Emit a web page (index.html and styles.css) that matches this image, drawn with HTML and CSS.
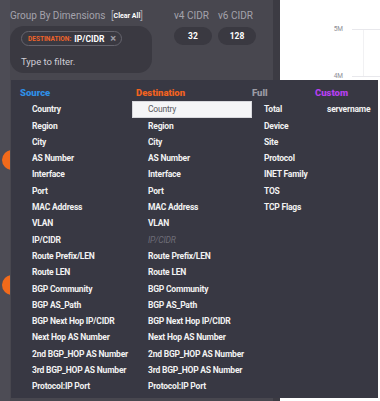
FILE: index.html
```html
<!DOCTYPE html>
<html lang="en">
<head>
  <meta charset="UTF-8" />
  <title>Group By Dimensions</title>
  <link rel="stylesheet" href="styles.css">
</head>
<body>
  <div class="app">
    <div class="panel">
      <div class="rail">
        <span class="dot"></span>
        <span class="dot dot-low"></span>
      </div>
      <div class="controls">
        <div class="group">
          <div class="group-label">Group By Dimensions <span class="clear">[<b>Clear All</b>]</span></div>
          <div class="filter">
            <div class="chip"><em>Destination:</em> IP/CIDR <i>&times;</i></div>
            <div class="hint">Type to filter.</div>
          </div>
        </div>
        <div class="cidr">
          <div class="cidr-label">v4 CIDR</div>
          <div class="pill">32</div>
        </div>
        <div class="cidr">
          <div class="cidr-label">v6 CIDR</div>
          <div class="pill">128</div>
        </div>
      </div>
    </div>

    <div class="chart">
      <div class="tick first"><span>5M</span><div class="line"></div></div>
      <div class="tick"><span>4M</span><div class="line"></div></div>
    </div>

    <div class="menu">
      <div class="col">
        <div class="head source">Source</div>
        <div class="item">Country</div>
        <div class="item">Region</div>
        <div class="item">City</div>
        <div class="item">AS Number</div>
        <div class="item">Interface</div>
        <div class="item">Port</div>
        <div class="item">MAC Address</div>
        <div class="item">VLAN</div>
        <div class="item">IP/CIDR</div>
        <div class="item">Route Prefix/LEN</div>
        <div class="item">Route LEN</div>
        <div class="item">BGP Community</div>
        <div class="item">BGP AS_Path</div>
        <div class="item">BGP Next Hop IP/CIDR</div>
        <div class="item">Next Hop AS Number</div>
        <div class="item">2nd BGP_HOP AS Number</div>
        <div class="item">3rd BGP_HOP AS Number</div>
        <div class="item">Protocol:IP Port</div>
      </div>
      <div class="col">
        <div class="head dest">Destination</div>
        <div class="item active">Country</div>
        <div class="item">Region</div>
        <div class="item">City</div>
        <div class="item">AS Number</div>
        <div class="item">Interface</div>
        <div class="item">Port</div>
        <div class="item">MAC Address</div>
        <div class="item">VLAN</div>
        <div class="item disabled">IP/CIDR</div>
        <div class="item">Route Prefix/LEN</div>
        <div class="item">Route LEN</div>
        <div class="item">BGP Community</div>
        <div class="item">BGP AS_Path</div>
        <div class="item">BGP Next Hop IP/CIDR</div>
        <div class="item">Next Hop AS Number</div>
        <div class="item">2nd BGP_HOP AS Number</div>
        <div class="item">3rd BGP_HOP AS Number</div>
        <div class="item">Protocol:IP Port</div>
      </div>
      <div class="col">
        <div class="head full">Full</div>
        <div class="item">Total</div>
        <div class="item">Device</div>
        <div class="item">Site</div>
        <div class="item">Protocol</div>
        <div class="item">INET Family</div>
        <div class="item">TOS</div>
        <div class="item">TCP Flags</div>
      </div>
      <div class="col">
        <div class="head custom">Custom</div>
        <div class="item">servername</div>
      </div>
    </div>
  </div>
</body>
</html>
```

FILE: styles.css
```css
body {
  margin: 0;
  font-family: 'Roboto', 'Liberation Sans', sans-serif;
  background: #48474f;
  color: #f2f2f2;
}

.app {
  position: relative;
  display: flex;
  height: 401px;
  overflow: hidden;
}

/* left settings panel */
.panel {
  width: 273px;
  flex: none;
  display: flex;
  background: #48474f;
  border-right: 7px solid #3c3b43;
}

.rail {
  width: 10px;
  flex: none;
  overflow: hidden;
  display: flex;
  flex-direction: column;
  background: #4d4c55;
}

.dot {
  width: 20px;
  height: 20px;
  flex: none;
  border-radius: 50%;
  background: #f26a1b;
  margin: 150px 0 0 2px;
}

.dot-low {
  margin-top: 105px;
}

.controls {
  display: flex;
  align-items: flex-start;
  padding-top: 9px;
}

.group {
  width: 142px;
}

.group-label {
  height: 14px;
  font-size: 10px;
  line-height: 14px;
  color: #a4a3ac;
  white-space: nowrap;
  margin-bottom: 3px;
}

.clear {
  margin-left: 3px;
}

.clear b {
  color: #fff;
  font-size: 7px;
  vertical-align: 1px;
}

.filter {
  box-sizing: border-box;
  height: 47px;
  padding: 5px 0 0 11px;
  border-radius: 14px;
  background: #3a3941;
}

.chip {
  display: flex;
  align-items: center;
  box-sizing: border-box;
  height: 15px;
  width: 101px;
  padding: 0 5px 0 6px;
  border: 1px solid #65646d;
  border-radius: 8px;
  font-size: 8.5px;
  font-weight: 700;
  color: #fff;
  white-space: nowrap;
}

.chip em {
  font-style: normal;
  text-transform: uppercase;
  font-size: 6.5px;
  color: #ef642a;
  margin-right: 3px;
}

.chip i {
  font-style: normal;
  color: #9d9ca5;
  font-size: 11px;
  margin-left: auto;
}

.hint {
  margin-top: 9px;
  font-size: 9.5px;
  line-height: 14px;
  color: #cfced6;
}

.cidr {
  width: 38px;
  margin-left: 6px;
}

.group + .cidr {
  margin-left: 22px;
}

.cidr-label {
  font-size: 10px;
  line-height: 14px;
  color: #a4a3ac;
  white-space: nowrap;
  margin-bottom: 4px;
}

.pill {
  height: 18px;
  line-height: 18px;
  border-radius: 9px;
  background: #3a3941;
  text-align: center;
  font-size: 8.5px;
  font-weight: 700;
  color: #fff;
}

/* chart behind the menu */
.chart {
  flex: 1;
  background: #fff;
  background-image: linear-gradient(#f1f1f3, #f1f1f3);
  background-size: 1px 48px;
  background-position: 83px 29px;
  background-repeat: no-repeat;
}

.tick {
  display: flex;
  align-items: center;
  height: 10px;
  margin-top: 37px;
}

.tick.first {
  margin-top: 24px;
}

.tick span {
  width: 63px;
  padding-right: 9px;
  text-align: right;
  font-size: 6.5px;
  color: #8d8d95;
}

.line {
  flex: 1;
  height: 1px;
  background: #e8e8ec;
}

/* dimension dropdown */
.menu {
  position: absolute;
  left: 11px;
  top: 80px;
  right: 2px;
  bottom: 3px;
  box-sizing: border-box;
  padding: 5px 0 0 9px;
  background: #383843;
  display: grid;
  grid-template-columns: 116px 116px 63px auto;
}

.col {
  display: flex;
  flex-direction: column;
}

.head {
  font-size: 9.5px;
  font-weight: 900;
  line-height: 16.3px;
}

.source { color: #2f8fe6; }
.dest { color: #f2621f; }
.full { color: #9b9aa4; }
.custom { color: #b63ff0; }

.item {
  font-size: 8.5px;
  font-weight: 700;
  letter-spacing: -0.2px;
  line-height: 16.3px;
  padding-left: 12px;
  white-space: nowrap;
}

.item.active {
  margin-left: -4px;
  padding-left: 16px;
  background: #f5f5f7;
  color: #5b5b63;
  font-weight: 400;
  box-shadow: inset 0 0 0 1px #d8d8dd;
}

.item.disabled {
  color: #6f6e79;
  font-style: italic;
  font-weight: 400;
}
```
